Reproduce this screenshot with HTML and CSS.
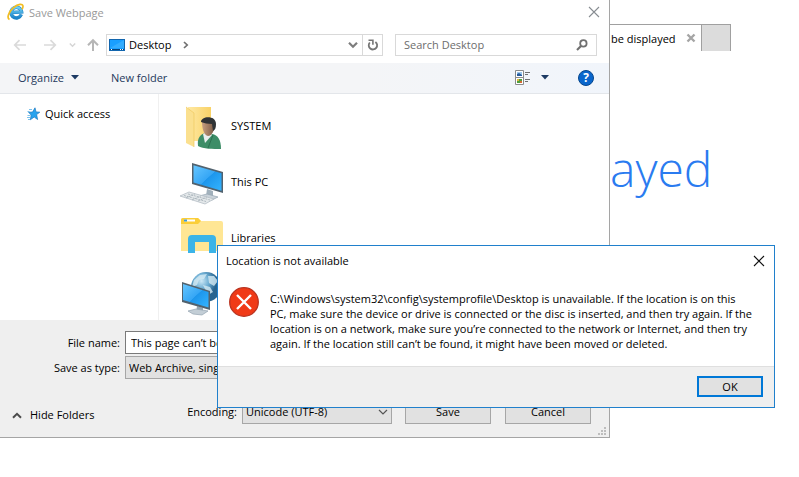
FILE: index.html
```html
<!DOCTYPE html>
<html lang="en">
<head>
<meta charset="utf-8">
<title>Save Webpage</title>
<link rel="stylesheet" href="styles.css">
</head>
<body>
<main class="browser">
  <div class="tabs">
    <div class="tab"><span>be displayed</span>
      <button class="bare" aria-label="Close tab"><svg width="10" height="10" viewBox="0 0 10 10"><path d="M1.5 1.5l7 7M8.500 1.500l-7 7" stroke="#a5a5a5" stroke-width="2.400"/></svg></button>
    </div>
    <button class="new-tab" aria-label="New tab"></button>
  </div>
  <h1 class="headline">ayed</h1>
</main>

<section class="save-window" aria-label="Save Webpage">
  <header class="titlebar">
    <svg width="18" height="18" viewBox="0 0 18 18"><defs><linearGradient id="ie" x2="0" y2="1"><stop stop-color="#6fd0f5"/><stop offset="1" stop-color="#1c83c9"/></linearGradient></defs><path d="M14.300 11.500A5.300 5.300 0 1 1 14.600 8.900L4.500 9.600" fill="none" stroke="#2387c7" stroke-width="3.500"/><path d="M14.300 11.500A5.300 5.300 0 1 1 14.600 8.900L4.500 9.600" fill="none" stroke="url(#ie)" stroke-width="2.500"/><path d="M2.500 16.500C-.5 15 1.500 9 6.500 4.700 11 .7 16 .3 16 3.300c0 1-.4 2-1 3" fill="none" stroke="#f2bd22" stroke-width="1.700"/></svg>
    <span class="caption">Save Webpage</span>
    <button class="bare" aria-label="Close"><svg width="12" height="12" viewBox="0 0 12 12"><path d="M1 1l10 10M11 1L1 11" stroke="#888d92" stroke-width="1.100"/></svg></button>
  </header>

  <nav class="nav-row">
    <button class="bare" aria-label="Back"><svg width="14" height="12" viewBox="0 0 14 12"><path d="M13 6H2M6.500 1.200L1.700 6l4.800 4.800" fill="none" stroke="#dadada" stroke-width="1.700"/></svg></button>
    <button class="bare forward" aria-label="Forward"><svg width="14" height="12" viewBox="0 0 14 12"><path d="M1 6h11M7.500 1.200L12.300 6l-4.800 4.800" fill="none" stroke="#dadada" stroke-width="1.700"/></svg></button>
    <button class="bare recent" aria-label="Recent locations"><svg width="7" height="6" viewBox="0 0 7 6"><path d="M.8 1.500l2.700 2.700 2.700-2.700" fill="none" stroke="#d5d5d5" stroke-width="1.400"/></svg></button>
    <button class="bare up" aria-label="Up"><svg width="14" height="14" viewBox="0 0 14 14"><path d="M7 13V2.500M2 7.200L7 2.200l5 5" fill="none" stroke="#b6b6b6" stroke-width="2"/></svg></button>
    <div class="address">
      <svg width="16" height="12" viewBox="0 0 16 12"><rect x=".5" y=".5" width="15" height="11" fill="#1a9fff" stroke="#1266ae"/><path d="M1 9L15 1v8z" fill="#34adff"/><path d="M1 10.500h14" stroke="#06447c"/><path d="M2 10.500h2M11 10.500h3" stroke="#fff" stroke-dasharray="1 1"/></svg>
      <span>Desktop</span>
      <svg class="crumb" width="6" height="8" viewBox="0 0 6 8"><path d="M1 1l3.200 3L1 7" fill="none" stroke="#707070" stroke-width="1.700"/></svg>
      <button class="bare history" aria-label="Previous locations"><svg width="10" height="8" viewBox="0 0 10 8"><path d="M1 1.800l4 4 4-4" fill="none" stroke="#7d7d7d" stroke-width="2.200"/></svg></button>
      <button class="bare refresh" aria-label="Refresh"><svg width="12" height="12" viewBox="0 0 12 12"><path d="M8.400 2.900a4.200 4.200 0 1 1-5.600.6" fill="none" stroke="#767676" stroke-width="1.800"/><path d="M1.500 1.300h4.400v4.400" fill="none" stroke="#767676" stroke-width="1.600"/></svg></button>
    </div>
    <label class="search"><input type="search" placeholder="Search Desktop" aria-label="Search Desktop"><svg width="12" height="12" viewBox="0 0 12 12"><circle cx="7.400" cy="4.400" r="3.200" fill="none" stroke="#707070" stroke-width="1.800"/><path d="M5 7L1 11" stroke="#707070" stroke-width="2.200"/></svg></label>
  </nav>

  <div class="toolbar">
    <button class="bare organize">Organize <svg width="8" height="5" viewBox="0 0 8 5"><path d="M0 0h8L4 4.600z" fill="#1c3a63"/></svg></button>
    <button class="bare new-folder">New folder</button>
    <button class="bare view" aria-label="Change view"><svg width="16" height="16" viewBox="0 0 16 16"><path d="M.5.5h8v14h-8zM.5 7.500h8" fill="#fff" stroke="#8b8b8b"/><path d="M2 2h5v4H2z" fill="#9fc9ee"/><path d="M2 6V4l2-1 3 2v1z" fill="#285b9c"/><path d="M2 9h5v4H2z" fill="#4f9f3e"/><path d="M2 9h2v2H2z" fill="#e2b63a"/><path d="M5 11h2v2H5z" fill="#d56a31"/><path d="M10 2.500h5M10 4.500h3M10 9.500h5M10 11.500h3" stroke="#717171"/></svg></button>
    <button class="bare view-menu" aria-label="More view options"><svg width="8" height="5" viewBox="0 0 8 5"><path d="M0 0h8L4 4.600z" fill="#1c3a63"/></svg></button>
    <button class="bare help" aria-label="Help">?</button>
  </div>

  <div class="explorer">
    <aside class="sidebar">
      <a class="quick" href="#"><svg width="14" height="14" viewBox="0 0 14 14"><path d="M9 .8l1 4.100 3.800.3-3.200 2.400 1 4.900L8.200 10l-3.900 2.800.9-4.700-2.600-2.800 4-.3z" fill="#27a3ee" stroke="#1877c0" stroke-width=".7"/><path d="M3 2.500h3M1.500 4.500h2M1.500 8.500h3M1 10.500h3M2 12.500h2" stroke="#6dbbea" stroke-width=".9"/></svg><span>Quick access</span></a>
    </aside>
    <ul class="items">
      <li><svg width="48" height="48" viewBox="0 0 48 48"><defs><linearGradient id="fold"><stop stop-color="#ffe9a4"/><stop offset="1" stop-color="#f9d267"/></linearGradient><linearGradient id="face"><stop stop-color="#c79f80"/><stop offset="1" stop-color="#7b5a45"/></linearGradient></defs><path d="M8 5h23v34H10z" fill="url(#fold)"/><path d="M6 5l8 6v34l-8-4z" fill="#fbe08f"/><path d="M6 5l8 6v34" fill="none" stroke="#efc860" stroke-width=".7"/><path d="M18 44c-1-8 2-12 8-13l6 1c6 1 9 6 9 15-8 0-18 0-23-3z" fill="#3d8d67"/><path d="M33 33l-5 13" stroke="#2c7050"/><path d="M23 32l2 9 7-8-3-4z" fill="#e9eeee"/><path d="M22 20c0-5 12-5 12 2 1 6-2 12-6 12-4-1-6-7-6-14z" fill="url(#face)"/><path d="M21 20c0-6 15-7 15 2 0 4-1 6-3 7l-1-7c-4 0-8-1-11-2z" fill="#303335"/></svg><span>SYSTEM</span></li>
      <li><svg width="48" height="48" viewBox="0 0 48 48"><defs><linearGradient id="scr" x2="1" y2="1"><stop stop-color="#66c6ff"/><stop offset=".5" stop-color="#35a6f5"/><stop offset=".51" stop-color="#1d96ec"/><stop offset="1" stop-color="#34b4ff"/></linearGradient></defs><path d="M27 31l6 2v5h-7z" fill="#a2b1bc"/><path d="M19 38l8-2 11 3-6 3-9-1z" fill="#cad3da" stroke="#94a4b0" stroke-width=".7"/><path d="M12 5l31 9v21L12 26z" fill="#52626e"/><path d="M13.500 7.200l28 8v17.600l-28-8.200z" fill="url(#scr)"/><path d="M0 38l9-4 25 7-9 5z" fill="#e4e8ea" stroke="#b5bec5" stroke-width=".8"/><path d="M4 37.500l22 6M8 36l22 6M6 40l9-4M12 42l9-4M18 43l9-4" stroke="#9aa6af" stroke-width=".7" stroke-dasharray="2 1"/></svg><span>This PC</span></li>
      <li><svg width="48" height="48" viewBox="0 0 48 48"><path d="M1 6q0-2 2-2h15l3 3h20q2 0 2 2v28H1z" fill="#ffe694"/><path d="M1 9V6q0-2 2-2h15l3 3-3 3H1z" fill="#fbce38"/><path d="M4 6.500h11" stroke="#fff" stroke-width="2"/><path d="M4 6.500h3" stroke="#3c9bdc" stroke-width="2"/><path d="M8 39V25q0-4 4-4h20q4 0 4 4v14h-7V28H15v11z" fill="#3bb4e8"/></svg><span>Libraries</span></li>
      <li><svg width="48" height="48" viewBox="0 0 48 48"><defs><radialGradient id="globe" cx=".35" cy=".3"><stop stop-color="#cce8f6"/><stop offset=".5" stop-color="#6eaed3"/><stop offset="1" stop-color="#28648f"/></radialGradient></defs><circle cx="26" cy="17" r="15" fill="url(#globe)"/><path d="M14 10l6-5 7-1-3 5-5 1-2 5-5 2zM28 6l6 0 4 5-4 5-5-3zM23 15l7 2 3 5-5 3z" fill="#d5eaf2" opacity=".8"/><path d="M17 36l6 2v5h-7z" fill="#93a5b1"/><path d="M8 41l8-2 12 2-6 4-9-1z" fill="#c3ced6" stroke="#94a4b0" stroke-width=".7"/><path d="M2 12l28 9v19L2 32z" fill="#52626e"/><path d="M3 14l25.500 8v15.500L3 30z" fill="url(#scr)"/></svg><span>Network</span></li>
    </ul>
  </div>

  <form class="fields">
    <label class="lab" for="name">File name:</label>
    <input class="wide" id="name" type="text" value="This page can’t be displayed">
    <label class="lab" for="type">Save as type:</label>
    <select class="wide" id="type"><option>Web Archive, single file (*.mht)</option></select>
    <div class="actions">
      <button class="bare hide" type="button"><svg width="10" height="7" viewBox="0 0 10 7"><path d="M1 5.800l4-4 4 4" fill="none" stroke="#4b4b4b" stroke-width="2"/></svg>Hide Folders</button>
      <label class="enc-label" for="enc">Encoding:</label>
      <span class="enc-wrap"><select id="enc"><option>Unicode (UTF-8)</option></select><svg width="10" height="7" viewBox="0 0 10 7"><path d="M1 1l4 4 4-4" fill="none" stroke="#555" stroke-width="1.200"/></svg></span>
      <button class="push" type="button">Save</button>
      <button class="push" type="button">Cancel</button>
    </div>
    <svg class="grip" width="8" height="8" viewBox="0 0 8 8"><path d="M6 0h2v2H6zM3 3h2v2H3zM6 3h2v2H6zM0 6h2v2H0zM3 6h2v2H3zM6 6h2v2H6z" fill="#bdbdbd"/></svg>
  </form>
</section>

<section class="error-window" role="alertdialog" aria-labelledby="err-title">
  <header class="error-title">
    <span id="err-title">Location is not available</span>
    <button class="bare" aria-label="Close"><svg width="12" height="12" viewBox="0 0 12 12"><path d="M1 1l10 10M11 1L1 11" stroke="#111" stroke-width="1.100"/></svg></button>
  </header>
  <div class="error-body">
    <svg width="30" height="30" viewBox="0 0 30 30"><circle cx="15" cy="15" r="14.300" fill="#f03a17" stroke="#b93320" stroke-width="1.300"/><path d="M8 8l14 14M22 8L8 22" stroke="#fff" stroke-width="2.400"/></svg>
    <p>C:\Windows\system32\config\systemprofile\Desktop is unavailable. If the location is on this<br>PC, make sure the device or drive is connected or the disc is inserted, and then try again. If the<br>location is on a network, make sure you’re connected to the network or Internet, and then try<br>again. If the location still can’t be found, it might have been moved or deleted.</p>
  </div>
  <footer class="error-foot"><button class="ok">OK</button></footer>
</section>
</body>
</html>
```
FILE: styles.css
```css
* { box-sizing: border-box; }
body, h1, p, ul { margin: 0; padding: 0; }
body, button, input, select {
  font-family: "Open Sans", "Noto Sans", sans-serif;
  font-size: 11px;
  line-height: 16px;
  color: #000;
}
body { background: #fff; min-height: 100vh; overflow: hidden; }
svg { display: block; flex: none; }
.bare {
  display: flex;
  align-items: center;
  padding: 0;
  border: 0;
  background: none;
  white-space: nowrap;
}

/* Browser page behind the dialogs */
.browser { padding: 24px 0 0 610px; }
.tabs { display: flex; height: 27px; }
.tab {
  display: flex;
  align-items: center;
  justify-content: space-between;
  width: 92px;
  padding: 0 5px 0 1px;
  border-top: 1px solid #a0a0a0;
  border-right: 1px solid #a0a0a0;
  white-space: nowrap;
}
.tab span { padding-top: 2px; }
.new-tab {
  width: 29px;
  padding: 0;
  border: solid #a0a0a0;
  border-width: 1px 1px 0 0;
  background: #dcdcdc;
}
.headline {
  margin-top: 84px;
  font-size: 48px;
  line-height: 68px;
  font-weight: 300;
  color: #2a7bf0;
}

/* Save dialog */
.save-window {
  position: absolute;
  top: 0;
  left: 0;
  right: 189px;
  background: #fff;
  border: solid #a5a5a5;
  border-width: 0 1px 1px 0;
}
.titlebar {
  display: flex;
  align-items: center;
  gap: 4px;
  height: 26px;
  padding: 0 9px 2px 7px;
  color: #999;
}
.caption { flex: 1; padding-top: 2px; }
.nav-row {
  display: flex;
  align-items: center;
  height: 37px;
  padding: 1px 12px 0 13px;
}
.forward { margin-left: 16px; }
.recent { margin-left: 12px; }
.up { margin-left: 10px; }
.address {
  display: flex;
  align-items: center;
  flex: 1;
  height: 22px;
  margin-left: 6px;
  padding-left: 2px;
  border: 1px solid #d9d9d9;
}
.address span { margin-left: 4px; }
.crumb { margin-left: 12px; }
.history { margin: 0 4px 0 auto; }
.refresh {
  justify-content: center;
  width: 20px;
  height: 20px;
  border-left: 1px solid #d9d9d9;
}
.search {
  display: flex;
  align-items: center;
  width: 202px;
  height: 22px;
  margin-left: 12px;
  padding: 0 8px;
  border: 1px solid #d9d9d9;
}
.search input {
  flex: 1;
  min-width: 0;
  padding: 0;
  border: 0;
  outline: 0;
  background: none;
  appearance: none;
}
.search input::placeholder { color: #6d6d6d; opacity: 1; }
.toolbar {
  display: flex;
  align-items: center;
  height: 31px;
  padding: 0 15px 1px 18px;
  border-bottom: 1px solid #e3e6ea;
  background: linear-gradient(90deg, #f4f5f7 60%, #f1f5fb);
}
.toolbar .bare { color: #1e395b; }
.organize { gap: 7px; }
.new-folder { margin-left: 32px; }
.view { margin-left: auto; }
.view-menu { margin-left: 10px; }
.toolbar .help {
  justify-content: center;
  width: 16px;
  height: 16px;
  margin-left: 29px;
  border: 1px solid #07478d;
  border-radius: 50%;
  background: #0a66cc;
  color: #fff;
  font-size: 12px;
  font-weight: 700;
}
.explorer { display: flex; height: 226px; overflow: hidden; }
.sidebar { width: 159px; padding: 12px 0 0 26px; border-right: 1px solid #f0f0f0; }
.quick { display: flex; align-items: center; gap: 5px; color: #000; text-decoration: none; }
.items { list-style: none; padding: 8px 0 0 21px; }
.items li { display: flex; align-items: flex-start; gap: 3px; height: 56px; }
.items span { margin-top: 16px; }
.items li svg { overflow: visible; }

/* Form rows at the bottom of the save dialog */
.fields {
  position: relative;
  display: grid;
  grid-template-columns: 120px 1fr;
  gap: 2px 5px;
  padding: 11px 18px 13px 0;
  background: #efefef;
}
.lab { align-self: center; text-align: right; }
.wide { width: 100%; height: 23px; padding: 0 5px; }
input.wide { border: 1px solid #7a7a7a; background: #fff; }
select { appearance: none; border: 1px solid #a6a6a6; border-radius: 0; background: #e1e1e1; }
select.wide { padding: 0 3px; }
.actions {
  grid-column: 1 / -1;
  display: flex;
  align-items: center;
  margin-top: 19px;
}
.hide { gap: 8px; padding: 6px 0 0 12px; }
.enc-label { margin-left: auto; }
.enc-wrap { position: relative; margin: 0 13px 0 5px; }
.enc-wrap select { display: block; width: 150px; height: 24px; padding: 0 3px; }
.enc-wrap svg { position: absolute; top: 9px; right: 4px; }
.push {
  width: 86px;
  height: 24px;
  padding: 0;
  border: 1px solid #a6a6a6;
  background: #e1e1e1;
}
.push + .push { margin-left: 14px; }
.grip { position: absolute; right: 3px; bottom: 2px; }

/* Error dialog */
.error-window {
  position: absolute;
  top: 245px;
  left: 217px;
  right: 24px;
  background: #fff;
  border: 1px solid #2080cc;
}
.error-title {
  display: flex;
  align-items: center;
  justify-content: space-between;
  height: 29px;
  padding: 0 9px 0 8px;
}
.error-body {
  display: flex;
  gap: 11px;
  padding: 12px 9px 15px 11px;
}
.error-body p { padding-top: 4px; line-height: 15px; white-space: nowrap; }
.error-foot {
  display: flex;
  justify-content: flex-end;
  padding: 9px 11px 10px;
  border-top: 1px solid #dfdfdf;
  background: #efefef;
}
.ok {
  width: 66px;
  height: 21px;
  padding: 0;
  border: 2px solid #0078d7;
  background: #e1e1e1;
}
```
